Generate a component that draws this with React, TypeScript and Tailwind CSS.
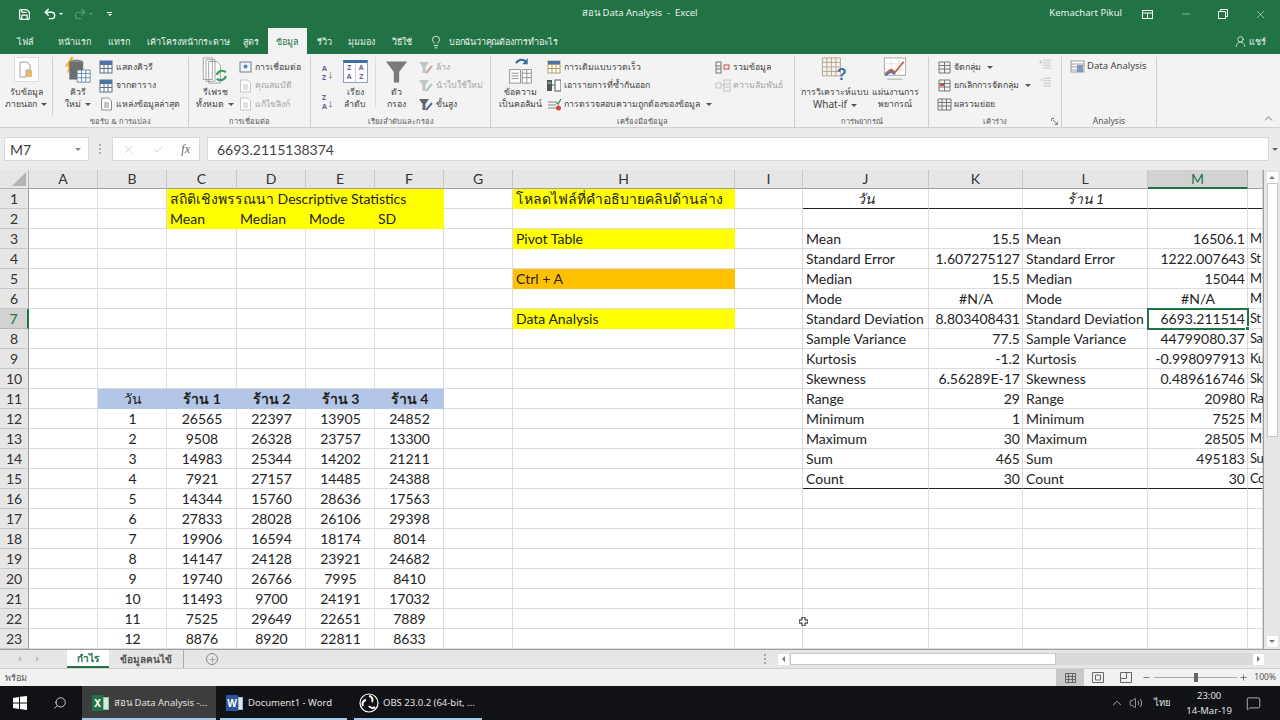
import { Save, Undo2, Redo2, Lightbulb, UserRound, Minus, X, Search, ChevronUp, Plus, Volume2, MessageSquare, Check } from 'lucide-react';

const colLetters = ['A', 'B', 'C', 'D', 'E', 'F', 'G', 'H', 'I', 'J', 'K', 'L', 'M', 'N'];

const statLabels = ['Mean', 'Standard Error', 'Median', 'Mode', 'Standard Deviation', 'Sample Variance', 'Kurtosis', 'Skewness', 'Range', 'Minimum', 'Maximum', 'Sum', 'Count'];
const statN = ['M', 'St', 'M', 'M', 'St', 'Sa', 'Ku', 'Sk', 'Ra', 'M', 'M', 'Su', 'Co'];
const statK = ['15.5', '1.607275127', '15.5', '#N/A', '8.803408431', '77.5', '-1.2', '6.56289E-17', '29', '1', '30', '465', '30'];
const statM = ['16506.1', '1222.007643', '15044', '#N/A', '6693.211514', '44799080.37', '-0.998097913', '0.489616746', '20980', '7525', '28505', '495183', '30'];

const shopRows = [
  [1, 26565, 22397, 13905, 24852],
  [2, 9508, 26328, 23757, 13300],
  [3, 14983, 25344, 14202, 21211],
  [4, 7921, 27157, 14485, 24388],
  [5, 14344, 15760, 28636, 17563],
  [6, 27833, 28028, 26106, 29398],
  [7, 19906, 16594, 18174, 8014],
  [8, 14147, 24128, 23921, 24682],
  [9, 19740, 26766, 7995, 8410],
  [10, 11493, 9700, 24191, 17032],
  [11, 7525, 29649, 22651, 7889],
  [12, 8876, 8920, 22811, 8633],
];

type Cell = { t?: string; cls?: string };

function buildCells() {
  const cells: Record<string, Cell> = {};
  const yellow = 'bg-[#ffff00] border-transparent';
  cells.C1 = { t: 'สถิติเชิงพรรณนา Descriptive Statistics', cls: `${yellow} z-[1]` };
  ['D1', 'E1', 'F1'].forEach((k) => (cells[k] = { cls: yellow }));
  ['Mean', 'Median', 'Mode', 'SD'].forEach((t, i) => (cells['CDEF'[i] + '2'] = { t, cls: yellow }));
  cells.H1 = { t: 'โหลดไฟล์ที่คำอธิบายคลิปด้านล่าง', cls: yellow };
  cells.H3 = { t: 'Pivot Table', cls: yellow };
  cells.H5 = { t: 'Ctrl + A', cls: 'bg-[#ffc000] border-transparent' };
  cells.H7 = { t: 'Data Analysis', cls: yellow };
  ['วัน', 'ร้าน 1', 'ร้าน 2', 'ร้าน 3', 'ร้าน 4'].forEach((t, i) => {
    cells['BCDEF'[i] + '11'] = { t, cls: `bg-[#b4c6e7] border-transparent text-center ${i > 0 ? 'font-bold' : ''}` };
  });
  shopRows.forEach((row, r) => {
    row.forEach((v, i) => (cells['BCDEF'[i] + (r + 12)] = { t: String(v), cls: 'text-center' }));
  });
  const line = 'border-b-[#222222]';
  cells.J1 = { t: 'วัน', cls: `italic text-center ${line}` };
  cells.K1 = { cls: line };
  cells.L1 = { t: 'ร้าน 1', cls: `italic text-center ${line}` };
  cells.M1 = { cls: line };
  cells.N1 = { cls: line };
  statLabels.forEach((label, i) => {
    const r = i + 3;
    const last = i === statLabels.length - 1 ? line : '';
    cells['J' + r] = { t: label, cls: last };
    cells['K' + r] = { t: statK[i], cls: `${statK[i] === '#N/A' ? 'text-center' : 'text-right'} ${last}` };
    cells['L' + r] = { t: label, cls: last };
    cells['M' + r] = { t: statM[i], cls: `${statM[i] === '#N/A' ? 'text-center' : 'text-right'} ${last}` };
    cells['N' + r] = { t: statN[i], cls: `!pl-[2px] !pr-0 text-[13px] tracking-[-0.5px] ${last}` };
  });
  return cells;
}

const cells = buildCells();

function Sheet() {
  return (
    <div className="relative flex-1 overflow-hidden font-['Lato','Noto_Sans',sans-serif] text-[14px] text-[#222222]">
      <div className="grid grid-cols-[29px_69px_69px_70px_69px_69px_69px_69px_222px_68px_126px_94px_125px_100px_15px] grid-rows-[19px_repeat(23,20px)]">
        <div className="flex items-end justify-end border-r border-b border-[#b5b5b5] bg-[#e6e6e6] p-[2px]">
          <svg width="14" height="14" viewBox="0 0 14 14"><polygon points="14,0 14,14 0,14" fill="#b4b4b4" /></svg>
        </div>
        {colLetters.map((c) => (
          <div
            key={c}
            className={
              c === 'M'
                ? 'border-r border-b-2 border-r-[#b5b5b5] border-b-[#217346] bg-[#d2d2d2] text-center leading-[18px] text-[#217346]'
                : 'border-r border-b border-[#c8c8c8] border-b-[#9f9f9f] bg-[#e6e6e6] text-center leading-[18px] text-[#333333]'
            }
          >
            {c === 'N' ? '' : c}
          </div>
        ))}
        {Array.from({ length: 23 }, (_, i) => i + 1).map((r) => (
          <Row key={r} r={r} />
        ))}
      </div>
      {/* mouse cursor */}
      <div className="absolute left-[799px] top-[447px] z-20">
        <svg width="9" height="9" viewBox="0 0 9 9"><path d="M3 0h3v3h3v3H6v3H3V6H0V3h3z" fill="#fff" stroke="#111" strokeWidth="1" /></svg>
      </div>
    </div>
  );
}

function Row({ r }: { r: number }) {
  return (
    <>
      <div
        className={
          r === 7
            ? 'border-r-2 border-b border-r-[#217346] border-b-[#b5b5b5] bg-[#d2d2d2] text-center leading-[19px] text-[#217346]'
            : 'border-r border-b border-[#c8c8c8] border-r-[#9f9f9f] bg-[#e6e6e6] text-center leading-[19px] text-[#333333]'
        }
      >
        {r}
      </div>
      {colLetters.map((c) => {
        const cell = cells[c + r];
        const active = c === 'M' && r === 7;
        return (
          <div
            key={c}
            className={`relative whitespace-nowrap border-r border-b border-[#dcdcdc] pl-[3px] pr-[2px] leading-[19px] ${cell?.cls ?? ''} ${active ? 'z-10 outline-2 -outline-offset-1 outline-[#217346]' : ''}`}
          >
            {cell?.t}
            {active && <span className="absolute -bottom-[3px] -right-[3px] h-[5px] w-[5px] border border-white bg-[#217346]" />}
          </div>
        );
      })}
    </>
  );
}

function Caret() {
  return <span className="ml-1 inline-block h-0 w-0 border-x-[3px] border-t-[3px] border-x-transparent border-t-[#555555] align-middle" />;
}

function SmallRow({ icon, label, off, caret }: { icon: React.ReactNode; label: string; off?: boolean; caret?: boolean }) {
  return (
    <div className={`flex h-[18.5px] items-center gap-[2px] whitespace-nowrap ${off ? 'text-[#a5a5a5]' : 'text-[#444444]'}`}>
      <span className="flex w-[16px] shrink-0 items-center justify-center">{icon}</span>
      {label}
      {caret && <Caret />}
    </div>
  );
}

function Big({ icon, lines, caret, w }: { icon: React.ReactNode; lines: string[]; caret?: boolean; w: string }) {
  return (
    <div className={`flex shrink-0 flex-col items-center ${w}`}>
      <div className="flex h-[29px] items-start justify-center">{icon}</div>
      <div className="text-center leading-[12px] text-[#444444]">
        {lines.map((l, i) => (
          <div key={l} className={`whitespace-nowrap ${l === 'What-if' ? 'text-[10px]' : ''}`}>
            {l}
            {caret && i === lines.length - 1 && <Caret />}
          </div>
        ))}
      </div>
    </div>
  );
}

function Group({ w, label, children, launcher, latin }: { w: string; label?: string; children: React.ReactNode; launcher?: boolean; latin?: boolean }) {
  return (
    <div className={`flex shrink-0 flex-col border-r border-[#d0d0d0] ${w}`}>
      <div className="flex h-[58px] items-start">{children}</div>
      <div className={`relative text-center leading-[12px] text-[#555555] ${latin ? 'text-[8.5px]' : 'text-[7.5px]'}`}>
        {label}
        {launcher && (
          <svg className="absolute right-[3px] top-[3px]" width="7" height="7" viewBox="0 0 7 7" fill="none" stroke="#888888"><path d="M0.500 3V0.500H3M2 2l4 4M6.500 3.500v3h-3" /></svg>
        )}
      </div>
    </div>
  );
}

/* ribbon pictures */
const GridIco = ({ c = '#5b6f8a' }: { c?: string }) => (
  <svg width="14" height="14" viewBox="0 0 14 14" fill="none" stroke={c}><rect x="1" y="1" width="12" height="12" fill="#fff" /><path d="M1 4.500h12M1 8.500h12M5 1v12M9 1v12" /><rect x="1" y="1" width="12" height="3" fill="#4b74a8" stroke="none" /></svg>
);
const DocIco = ({ c = '#8a8a8a' }: { c?: string }) => (
  <svg width="13" height="14" viewBox="0 0 13 14" fill="#fff" stroke={c}><path d="M1.500 1h7l3 3v9h-10z" /><path d="M4 6h5M4 8h5M4 10h5" /></svg>
);
const FunnelBig = () => (
  <svg width="23" height="24" viewBox="0 0 26 26"><path d="M1 1h24l-9 12v12h-6V13z" fill="#7a7a7a" /></svg>
);
const FunnelSmall = ({ c, mark }: { c: string; mark?: string }) => (
  <svg width="14" height="13" viewBox="0 0 14 13"><path d="M0 1h10L6.500 6v6h-3V6z" fill={c} />{mark && <path d="M7 12l6-7" stroke={mark} strokeWidth="2" />}</svg>
);

function Ribbon() {
  return (
    <div className="flex h-[74px] border-b border-[#d0d0d0] bg-[#f3f3f3] pt-[3px] font-['Noto_Sans',sans-serif] text-[8.75px]">
      <div className="flex h-[58px] w-[53px] shrink-0 items-start border-r border-[#d0d0d0]">
        <Big
          w="w-[52px]"
          icon={
            <div className="flex h-[25px] w-[25px] items-center justify-center border border-[#dcdcdc] bg-white">
              <svg width="14" height="17" viewBox="0 0 14 17"><path d="M1 1h7l3 3v5H7v7H1z" fill="#fff" stroke="#a0a0a0" /><rect x="7" y="9" width="6" height="7" rx="1" fill="#e2b872" /></svg>
            </div>
          }
          lines={['รับข้อมูล', 'ภายนอก']}
          caret
        />
      </div>
      <Group w="w-[136px]" label="ขอรับ & การแปลง">
        <Big
          w="w-[46px] ml-[2px]"
          icon={
            <svg width="28" height="26" viewBox="0 0 30 30">
              <path d="M7 0L0 11h4l-2 9 8-12H6l4-8z" fill="#f2b233" />
              <ellipse cx="13" cy="6" rx="8" ry="3" fill="#8a8a8a" />
              <rect x="5" y="6" width="16" height="20" fill="#6e6e6e" />
              <rect x="14" y="15" width="15" height="14" fill="#fff" stroke="#5b7fa8" />
              <path d="M14 19h15M14 24h15M19 15v14M24 15v14" stroke="#5b7fa8" />
            </svg>
          }
          lines={['คิวรี', 'ใหม่']}
          caret
        />
        <div className="-ml-[3px] mt-[1px]">
          <SmallRow icon={<GridIco />} label="แสดงคิวรี" />
          <SmallRow icon={<GridIco />} label="จากตาราง" />
          <SmallRow icon={<DocIco />} label="แหล่งข้อมูลล่าสุด" />
        </div>
      </Group>
      <Group w="w-[122px]" label="การเชื่อมต่อ">
        <Big
          w="w-[40px] ml-[6px]"
          icon={
            <svg width="26" height="27" viewBox="0 0 28 30" fill="none">
              <path d="M1 1h10v24H1zM4 3h10v24H4zM7 5h9l4 4v20H7z" fill="#fff" stroke="#9a9a9a" />
              <path d="M16 20a6 6 0 0 1 10-3M26 21a6 6 0 0 1-10 3" stroke="#3f9a5e" strokeWidth="2.400" />
            </svg>
          }
          lines={['รีเฟรช', 'ทั้งหมด']}
          caret
        />
        <div className="ml-[2px] mt-[1px]">
          <SmallRow icon={<svg width="13" height="13" viewBox="0 0 13 13" fill="none" stroke="#6d7f96"><rect x="1" y="1" width="11" height="10" /><circle cx="6.500" cy="5.500" r="2" fill="#4b8bc2" stroke="none" /></svg>} label="การเชื่อมต่อ" />
          <SmallRow off icon={<DocIco c="#c4c4c4" />} label="คุณสมบัติ" />
          <SmallRow off icon={<DocIco c="#c4c4c4" />} label="แก้ไขลิงก์" />
        </div>
      </Group>
      <Group w="w-[180px]" label="เรียงลำดับและกรอง">
        <div className="ml-[11px] flex w-[20px] flex-col gap-[11px] pt-[7px] text-[7px] font-bold leading-[9px]">
          <div className="flex items-center"><div className="text-[#6b5aa0]">A<br />Z</div><span className="ml-[1px] text-[11px] font-normal text-[#555555]">↓</span></div>
          <div className="flex items-center"><div className="text-[#6b5aa0]">Z<br />A</div><span className="ml-[1px] text-[11px] font-normal text-[#555555]">↓</span></div>
        </div>
        <Big
          w="w-[26px]"
          icon={
            <div className="mt-[3px] grid h-[23px] w-[25px] grid-cols-2 border border-[#8aa0b8] border-t-[3px] border-t-[#3f6fa3] bg-white text-center text-[7px] font-bold leading-[9px] text-[#7b5aa0]">
              <div>Z<br />A</div>
              <div className="border-l border-[#cccccc]">A<br />Z</div>
            </div>
          }
          lines={['เรียง', 'ลำดับ']}
        />
        <div className="ml-[7px] h-[50px] w-px bg-[#dddddd]" />
        <Big w="w-[36px] ml-[2px]" icon={<div className="mt-[3px]"><FunnelBig /></div>} lines={['ตัว', 'กรอง']} />
        <div className="ml-[4px] mt-[1px]">
          <SmallRow off icon={<FunnelSmall c="#c4c4c4" mark="#d0a0a0" />} label="ล้าง" />
          <SmallRow off icon={<FunnelSmall c="#c4c4c4" mark="#a8cbb0" />} label="นำไปใช้ใหม่" />
          <SmallRow icon={<FunnelSmall c="#666666" mark="#4b74a8" />} label="ขั้นสูง" />
        </div>
      </Group>
      <Group w="w-[304px]" label="เครื่องมือข้อมูล">
        <Big
          w="w-[49px] ml-[5px]"
          icon={
            <svg width="25" height="27" viewBox="0 0 26 30" fill="none">
              <path d="M8 7a7 7 0 0 1 11-2" stroke="#3f6fa3" strokeWidth="2.400" />
              <path d="M21 1v7h-6z" fill="#3f6fa3" />
              <rect x="1" y="14" width="12" height="15" fill="#fff" stroke="#8a8a8a" />
              <path d="M3 18h8M3 21h8M3 24h8" stroke="#8a8a8a" />
              <rect x="15" y="14" width="10" height="15" fill="#fff" stroke="#8a8a8a" />
              <path d="M15 18h10M15 23h10M20 14v15" stroke="#8a8a8a" />
            </svg>
          }
          lines={['ข้อความ', 'เป็นคอลัมน์']}
        />
        <div className="ml-[1px] mt-[1px] w-[169px]">
          <SmallRow icon={<GridIco c="#b89a6a" />} label="การเติมแบบรวดเร็ว" />
          <SmallRow icon={<svg width="14" height="13" viewBox="0 0 14 13"><rect x="0" y="1" width="5" height="11" fill="#555555" /><rect x="1" y="3" width="3" height="2" fill="#76b06f" /><rect x="8" y="1" width="6" height="11" fill="#fff" stroke="#555555" /><path d="M5 6h3" stroke="#3f6fa3" /></svg>} label="เอารายการที่ซ้ำกันออก" />
          <SmallRow icon={<svg width="15" height="13" viewBox="0 0 15 13" fill="none"><path d="M1 4h8M1 7h8M1 10h8" stroke="#8a8a8a" /><path d="M9 4l2 2 3-5" stroke="#3f9a5e" strokeWidth="1.400" /><circle cx="11.500" cy="10" r="2.500" fill="#d0453a" /></svg>} label="การตรวจสอบความถูกต้องของข้อมูล" caret />
        </div>
        <div className="mt-[1px]">
          <SmallRow icon={<svg width="16" height="13" viewBox="0 0 16 13" fill="none"><rect x="1" y="1" width="5" height="11" stroke="#777777" /><path d="M1 5h5M1 8h5" stroke="#777777" /><rect x="9" y="4" width="5" height="4" stroke="#c0504d" /></svg>} label="รวมข้อมูล" />
          <SmallRow off icon={<svg width="16" height="13" viewBox="0 0 16 13" fill="none" stroke="#c4c4c4"><rect x="1" y="4" width="5" height="5" /><rect x="9" y="1" width="6" height="11" /><path d="M9 5h6M9 8h6M6 6h3" /></svg>} label="ความสัมพันธ์" />
        </div>
      </Group>
      <Group w="w-[134px]" label="การพยากรณ์">
        <Big
          w="w-[78px] ml-[1px]"
          icon={
            <svg width="28" height="27" viewBox="0 0 30 30" fill="none">
              <path d="M1 1h20v20H1zM1 6h20M1 11h20M1 16h20M6 1v20M11 1v20M16 1v20" stroke="#b0a080" />
              <text x="17" y="25" fontSize="18" fontWeight="700" fill="#3f6fa3" fontFamily="Liberation Sans">?</text>
            </svg>
          }
          lines={['การวิเคราะห์แบบ', 'What-if']}
          caret
        />
        <Big
          w="w-[50px] -ml-[4px]"
          icon={
            <svg width="24" height="27" viewBox="0 0 24 28" fill="none">
              <rect x="1" y="1" width="22" height="18" fill="#fff" stroke="#a8a8a8" />
              <path d="M1 7h22M1 13h22M8 1v18M16 1v18" stroke="#e2e2e2" />
              <path d="M2 17l6-4 4 3 9-11" stroke="#d0583a" strokeWidth="1.800" />
              <path d="M2 19l6-4 4 3" stroke="#3f6fa3" strokeWidth="1.800" />
              <path d="M4 23h16" stroke="#a8a8a8" />
            </svg>
          }
          lines={['แผ่นงานการ', 'พยากรณ์']}
        />
      </Group>
      <Group w="w-[133px]" label="เค้าร่าง" launcher>
        <div className="ml-[7px] mt-[1px] w-[103px]">
          <SmallRow icon={<svg width="13" height="13" viewBox="0 0 13 13" fill="none" stroke="#777777"><path d="M1 1h11v11H1zM1 4.500h11M1 8h11M6.500 1v11" /></svg>} label="จัดกลุ่ม" caret />
          <SmallRow icon={<svg width="13" height="13" viewBox="0 0 13 13" fill="none" stroke="#777777"><path d="M1 1h11v11H1zM1 4.500h11M1 8h11M6.500 1v11" /><path d="M2 6h4" stroke="#c0504d" strokeWidth="2" /></svg>} label="ยกเลิกการจัดกลุ่ม" caret />
          <SmallRow icon={<svg width="15" height="13" viewBox="0 0 15 13" fill="none" stroke="#777777"><path d="M1 1h13v11H1zM1 4.500h13M1 8h13M5 1v11M9.500 1v11" /></svg>} label="ผลรวมย่อย" />
        </div>
        <div className="flex flex-col gap-[7px] pt-[2px]">
          <svg width="12" height="11" viewBox="0 0 14 12" fill="none" stroke="#c0c0c0"><path d="M5 1h9M5 4h9M5 7h9M5 10h9" /><path d="M0 3h4M2 1v4" /></svg>
          <svg width="12" height="11" viewBox="0 0 14 12" fill="none" stroke="#c0c0c0"><path d="M5 1h9M5 4h9M5 7h9M5 10h9" /><path d="M0 3h4" /></svg>
        </div>
      </Group>
      <Group w="w-[95px]" label="Analysis" latin>
        <div className="ml-[8px] flex h-[18px] items-center gap-[2px] whitespace-nowrap text-[9.5px] text-[#444444]">
          <svg width="15" height="13" viewBox="0 0 15 13" fill="none" stroke="#9a9a9a"><rect x="1" y="1" width="13" height="11" fill="#fff" /><path d="M1 4h13M1 7h8M1 10h8" /><rect x="7" y="5" width="6" height="7" fill="#7d9cc0" stroke="none" /></svg>
          Data Analysis
        </div>
      </Group>
      <div className="flex flex-1 items-end justify-end pb-[2px] pr-[5px]">
        <ChevronUp size={13} strokeWidth={1.5} color="#555555" />
      </div>
    </div>
  );
}

function TitleBar() {
  return (
    <div className="relative bg-[#217346] font-['Noto_Sans',sans-serif] text-[9px] text-[#e8f0ea]">
      <div className="flex h-[28px] items-center pl-[18px]">
        <Save size={13} strokeWidth={2.2} color="#ffffff" />
        <Undo2 size={14} strokeWidth={2.4} color="#ffffff" className="ml-[12px]" />
        <span className="ml-[2px] h-0 w-0 border-x-[2px] border-t-[2px] border-x-transparent border-t-white" />
        <Redo2 size={14} strokeWidth={2} color="#5f9a78" className="ml-[10px]" />
        <span className="ml-[2px] h-0 w-0 border-x-[2px] border-t-[2px] border-x-transparent border-t-[#5f9a78]" />
        <span className="ml-[14px] flex h-[5px] w-[5px] flex-col items-center border-t border-white pt-[1px]">
          <span className="h-0 w-0 border-x-[2px] border-t-[2px] border-x-transparent border-t-white" />
        </span>
        <div className="ml-[470px] whitespace-pre pb-[2px] text-[9.5px]">สอน Data Analysis  -  Excel</div>
        <div className="ml-auto whitespace-nowrap pb-[2px] text-[9.5px]">Kemachart Pikul</div>
        <svg className="ml-[20px]" width="11" height="9" viewBox="0 0 11 9" fill="none" stroke="#ffffff"><rect x="0.500" y="0.500" width="10" height="8" /><path d="M0.500 3h10M5.500 3v5" /></svg>
        <Minus size={12} strokeWidth={1} color="#ffffff" className="ml-[27px]" />
        <svg className="ml-[26px]" width="10" height="10" viewBox="0 0 10 10" fill="none" stroke="#ffffff"><path d="M0.500 2.500h7v7h-7zM2.500 2.500v-2h7v7h-2" /></svg>
        <X size={13} strokeWidth={1} color="#ffffff" className="ml-[26px] mr-[13px]" />
      </div>
      <div className="flex h-[26px] items-end whitespace-nowrap">
        <div className="ml-[17px] w-[41px] pb-[6px]">ไฟล์</div>
        <div className="w-[50px] pb-[6px]">หน้าแรก</div>
        <div className="w-[39px] pb-[6px]">แทรก</div>
        <div className="w-[96px] pb-[6px]">เค้าโครงหน้ากระดาษ</div>
        <div className="w-[25px] pb-[6px]">สูตร</div>
        <div className="h-[26px] w-[39px] bg-[#f3f3f3] pt-[7px] text-center text-[#217346]">ข้อมูล</div>
        <div className="ml-[10px] w-[31px] pb-[6px]">รีวิว</div>
        <div className="w-[44px] pb-[6px]">มุมมอง</div>
        <div className="w-[37px] pb-[6px]">วิธีใช้</div>
        <div className="flex items-center pb-[5px]">
          <Lightbulb size={14} strokeWidth={1.4} color="#ffffff" />
          <span className="ml-[6px] tracking-[-0.2px]">บอกฉันว่าคุณต้องการทำอะไร</span>
        </div>
        <div className="ml-auto mr-[14px] flex items-center gap-[2px] pb-[6px]">
          <UserRound size={13} strokeWidth={1.3} color="#ffffff" />
          แชร์
        </div>
      </div>
    </div>
  );
}

function FormulaBar() {
  return (
    <div className="flex h-[42px] items-center bg-[#ebebeb] font-['Noto_Sans',sans-serif] text-[#444444]">
      <div className="ml-[4px] flex h-[24px] w-[85px] items-center justify-between border border-[#d8d8d8] bg-white pl-[5px] pr-[7px] font-['Lato',sans-serif] text-[14px]">
        M7
        <span className="h-0 w-0 border-x-[3px] border-t-[3px] border-x-transparent border-t-[#8a8a8a]" />
      </div>
      <div className="ml-[10px] flex flex-col gap-[2px]">
        <span className="h-[2px] w-[2px] bg-[#b0b0b0]" />
        <span className="h-[2px] w-[2px] bg-[#b0b0b0]" />
        <span className="h-[2px] w-[2px] bg-[#b0b0b0]" />
      </div>
      <div className="ml-[11px] flex h-[24px] w-[88px] items-center justify-between border border-[#d8d8d8] bg-white px-[9px]">
        <X size={13} strokeWidth={1.2} color="#bdbdbd" />
        <Check size={13} strokeWidth={1.2} color="#bdbdbd" />
        <span className="font-['Liberation_Serif',serif] text-[12px] italic text-[#666666]">fx</span>
      </div>
      <div className="ml-[7px] flex h-[24px] flex-1 items-center border border-[#d8d8d8] bg-white pl-[9px] font-['Lato',sans-serif] text-[14px]">
        6693.2115138374
      </div>
      <div className="flex w-[11px] justify-center">
        <span className="h-0 w-0 border-x-[3px] border-t-[3px] border-x-transparent border-t-[#666666]" />
      </div>
    </div>
  );
}

function ScrollBtn({ dir }: { dir: 'up' | 'down' | 'left' | 'right' }) {
  const tri = {
    up: 'border-x-[3px] border-b-[3px] border-x-transparent border-b-[#777777]',
    down: 'border-x-[3px] border-t-[3px] border-x-transparent border-t-[#777777]',
    left: 'border-y-[3px] border-r-[3px] border-y-transparent border-r-[#777777]',
    right: 'border-y-[3px] border-l-[3px] border-y-transparent border-l-[#777777]',
  }[dir];
  return (
    <div className="flex h-[11px] w-[11px] shrink-0 items-center justify-center bg-white">
      <span className={`h-0 w-0 ${tri}`} />
    </div>
  );
}

function VScroll() {
  return (
    <div className="flex w-[17px] shrink-0 flex-col items-center border-l border-[#9f9f9f] bg-[#e6e6e6] pt-[2px] pb-[2px]">
      <ScrollBtn dir="up" />
      <div className="h-[254px] w-[11px] shrink-0 border border-[#c8c8c8] bg-white" />
      <div className="flex-1" />
      <ScrollBtn dir="down" />
    </div>
  );
}

function TabsBar() {
  return (
    <div className="flex h-[19px] items-stretch border-t border-[#9f9f9f] bg-[#e6e6e6] font-['Noto_Sans',sans-serif] text-[10px] text-[#555555]">
      <div className="flex w-[67px] items-center pl-[18px] text-[#c0c0c0]">
        <span className="h-0 w-0 border-y-[3px] border-r-[3px] border-y-transparent border-r-[#c0c0c0]" />
        <span className="ml-[15px] h-0 w-0 border-y-[3px] border-l-[3px] border-y-transparent border-l-[#c0c0c0]" />
      </div>
      <div className="flex w-[42px] items-center justify-center border-b-2 border-[#217346] bg-white font-bold text-[#217346]">กำไร</div>
      <div className="flex w-[75px] items-center justify-center border-r border-[#aaaaaa] font-bold">ข้อมูลคนไข้</div>
      <div className="ml-[22px] flex items-center">
        <span className="flex h-[12px] w-[12px] items-center justify-center rounded-full border border-[#888888]">
          <Plus size={9} strokeWidth={1.4} color="#777777" />
        </span>
      </div>
      <div className="ml-[546px] flex items-center">
        <div className="flex flex-col gap-[2px]">
          <span className="h-[2px] w-[2px] bg-[#a8a8a8]" />
          <span className="h-[2px] w-[2px] bg-[#a8a8a8]" />
          <span className="h-[2px] w-[2px] bg-[#a8a8a8]" />
        </div>
        <div className="ml-[12px]"><ScrollBtn dir="left" /></div>
        <div className="ml-px h-[12px] w-[266px] border border-[#c8c8c8] bg-white" />
        <div className="h-[12px] w-[197px] bg-[#dadada]" />
        <ScrollBtn dir="right" />
      </div>
    </div>
  );
}

function StatusBar() {
  return (
    <div className="flex h-[18px] items-center border-t border-[#d0d0d0] bg-[#f1f1f1] pl-[5px] font-['Noto_Sans',sans-serif] text-[9px] text-[#555555]">
      พร้อม
      <div className="ml-auto flex h-full items-center">
        <div className="flex h-full w-[28px] items-center justify-center bg-[#c8c8c8]">
          <svg width="11" height="10" viewBox="0 0 11 10" fill="none" stroke="#666666"><path d="M0.500 0.500h10v9h-10zM0.500 3.500h10M0.500 6.500h10M3.500 0.500v9M7.500 0.500v9" /></svg>
        </div>
        <svg className="ml-[8px]" width="12" height="11" viewBox="0 0 12 11" fill="none" stroke="#666666"><path d="M0.500 0.500h11v10h-11zM3.500 3h5v5h-5z" /></svg>
        <svg className="ml-[16px]" width="12" height="11" viewBox="0 0 12 11" fill="none" stroke="#666666"><path d="M0.500 0.500h11v10h-11zM6.500 0.500v6h-6" /></svg>
        <Minus size={9} strokeWidth={2} color="#555555" className="ml-[10px]" />
        <div className="relative ml-[3px] h-px w-[83px] bg-[#aaaaaa]">
          <span className="absolute left-[40px] -top-[4px] h-[9px] w-[4px] bg-[#666666]" />
        </div>
        <Plus size={9} strokeWidth={2} color="#555555" className="ml-[2px]" />
        <span className="ml-[6px] mr-[4px] text-[8.5px]">100%</span>
      </div>
    </div>
  );
}

function TaskButton({ w, icon, label, active }: { w: string; icon: React.ReactNode; label: string; active?: boolean }) {
  return (
    <div className={`flex h-full shrink-0 items-center border-b-2 border-[#a6c8ec] pt-[2px] ${w} ${active ? 'bg-[#3d3d3d]' : ''}`}>
      {icon}
      <span className="ml-[4px] whitespace-nowrap">{label}</span>
    </div>
  );
}

function Taskbar() {
  return (
    <div className="flex h-[34px] items-center bg-[#101215] font-['Noto_Sans',sans-serif] text-[9.5px] text-[#e0e0e0]">
      <svg className="ml-[13px]" width="14" height="14" viewBox="0 0 14 14" fill="#ffffff">
        <path d="M0 2l6-1v5.500H0zM7 .8L14 0v6.500H7zM0 7.500h6V13l-6-1zM7 7.500h7V14l-7-.9z" />
      </svg>
      <Search size={14} strokeWidth={1.3} color="#ffffff" className="ml-[26px] -scale-x-100" />
      <div className="ml-[15px] flex h-full">
        <TaskButton
          w="w-[134px] pl-[10px]"
          active
          icon={
            <div className="flex h-[16px] w-[18px] items-center">
              <span className="flex h-[16px] w-[11px] items-center justify-center bg-[#217346] text-[10px] font-bold text-white">X</span>
              <span className="h-[13px] w-[6px] border border-[#8fc2a2] bg-[#d8e8dd]" />
            </div>
          }
          label="สอน Data Analysis -..."
        />
        <div className="w-[4px]" />
        <TaskButton
          w="w-[127px] pl-[6px]"
          icon={
            <div className="flex h-[16px] w-[18px] items-center">
              <span className="flex h-[16px] w-[12px] items-center justify-center bg-[#2b579a] text-[10px] font-bold text-white">W</span>
              <span className="h-[13px] w-[5px] border border-[#a0b8d8] bg-[#dde6f2]" />
            </div>
          }
          label="Document1 - Word"
        />
        <div className="w-[7px]" />
        <TaskButton
          w="w-[128px] pl-[5px]"
          icon={
            <svg width="20" height="20" viewBox="0 0 20 20" fill="none" stroke="#ffffff" strokeWidth="1.200">
              <circle cx="10" cy="10" r="9" />
              <path d="M10 3a4 4 0 0 1 3 6M16 14a4 4 0 0 1-6-1M4 13a4 4 0 0 1 3-6" strokeWidth="2" />
            </svg>
          }
          label="OBS 23.0.2 (64-bit, ..."
        />
      </div>
      <div className="ml-auto flex items-center">
        <ChevronUp size={14} strokeWidth={1.3} color="#e0e0e0" />
        <Volume2 size={14} strokeWidth={1.2} color="#e0e0e0" className="ml-[5px]" />
        <span className="ml-[11px]">ไทย</span>
        <div className="ml-[15px] text-center leading-[15px]">
          <div>23:00</div>
          <div>14-Mar-19</div>
        </div>
        <MessageSquare size={15} strokeWidth={1.2} color="#e0e0e0" className="ml-[14px] mr-[19px]" />
      </div>
    </div>
  );
}

export default function App() {
  return (
    <div className="flex h-[720px] w-[1280px] flex-col overflow-hidden bg-white">
      <TitleBar />
      <Ribbon />
      <FormulaBar />
      <div className="flex h-[479px]">
        <Sheet />
        <VScroll />
      </div>
      <TabsBar />
      <StatusBar />
      <Taskbar />
    </div>
  );
}
